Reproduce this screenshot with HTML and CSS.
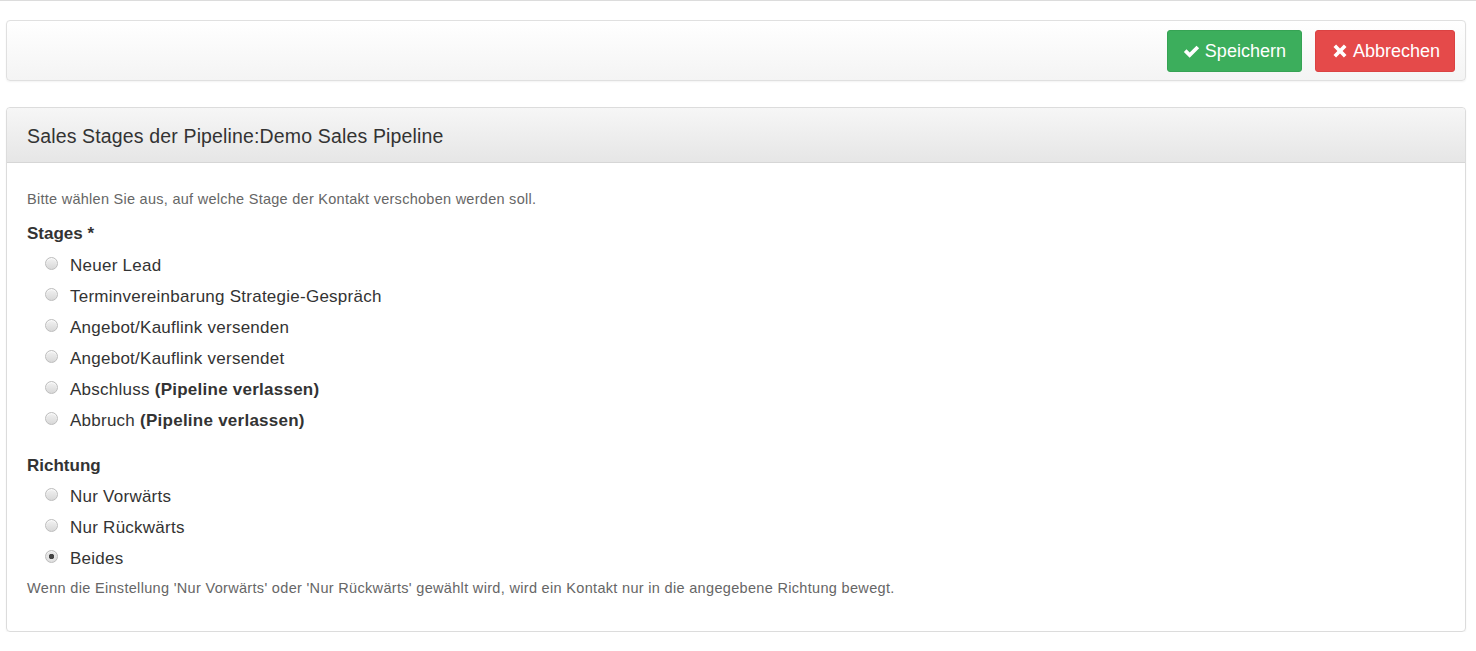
FILE: index.html
```html
<!DOCTYPE html>
<html lang="de">
<head>
  <meta charset="UTF-8">
  <meta name="viewport" content="width=device-width, initial-scale=1.0">
  <title>Sales Stages</title>
  <link rel="stylesheet" href="styles.css">
</head>
<body>
  <!-- Toolbar -->
  <div class="toolbar">
    <button type="button" class="btn btn-success">
      <svg class="btn-icon" viewBox="0 0 16 16" width="17" height="17"><path d="M0.8 8.4 L3.3 5.9 L6.3 8.9 L12.7 2.5 L15.2 5 L6.3 13.9 Z" fill="#fff"/></svg>
      Speichern
    </button>
    <button type="button" class="btn btn-danger">
      <svg class="btn-icon" viewBox="0 0 16 16" width="16" height="16"><path d="M1.5 4.1 L4.1 1.5 L8 5.4 L11.9 1.5 L14.5 4.1 L10.6 8 L14.5 11.9 L11.9 14.5 L8 10.6 L4.1 14.5 L1.5 11.9 L5.4 8 Z" fill="#fff"/></svg>
      Abbrechen
    </button>
  </div>

  <!-- Stages Panel -->
  <div class="panel">
    <div class="panel-heading">Sales Stages der Pipeline:Demo Sales Pipeline</div>
    <div class="panel-body">
      <p class="help">Bitte wählen Sie aus, auf welche Stage der Kontakt verschoben werden soll.</p>

      <div class="group">
        <div class="group-label">Stages *</div>
        <label class="radio"><input type="radio" name="stage"> Neuer Lead</label>
        <label class="radio"><input type="radio" name="stage"> Terminvereinbarung Strategie-Gespräch</label>
        <label class="radio"><input type="radio" name="stage"> Angebot/Kauflink versenden</label>
        <label class="radio"><input type="radio" name="stage"> Angebot/Kauflink versendet</label>
        <label class="radio"><input type="radio" name="stage"> Abschluss <strong>(Pipeline verlassen)</strong></label>
        <label class="radio"><input type="radio" name="stage"> Abbruch <strong>(Pipeline verlassen)</strong></label>
      </div>

      <div class="group">
        <div class="group-label">Richtung</div>
        <label class="radio"><input type="radio" name="direction"> Nur Vorwärts</label>
        <label class="radio"><input type="radio" name="direction"> Nur Rückwärts</label>
        <label class="radio"><input type="radio" name="direction" checked> Beides</label>
        <p class="help help-bottom">Wenn die Einstellung 'Nur Vorwärts' oder 'Nur Rückwärts' gewählt wird, wird ein Kontakt nur in die angegebene Richtung bewegt.</p>
      </div>
    </div>
  </div>
</body>
</html>
```

FILE: styles.css
```css
/* General */
body {
  font-family: 'Liberation Sans', Arial, sans-serif;
  margin: 0;
  padding: 19px 10px 0 6px;
  border-top: 1px solid #dcdcdc;
  color: #333;
  background-color: #fff;
}

/* Toolbar */
.toolbar {
  display: flex;
  justify-content: flex-end;
  gap: 13px;
  padding: 9px 10px 8px;
  border: 1px solid #e0e0e0;
  border-radius: 4px;
  background: linear-gradient(to bottom, #ffffff, #f4f4f4);
  box-shadow: 0 1px 2px rgba(0, 0, 0, 0.05);
}

.btn {
  display: flex;
  align-items: center;
  gap: 5px;
  height: 42px;
  padding: 0 15px;
  border: 1px solid transparent;
  border-radius: 3px;
  color: #fff;
  font-family: inherit;
  font-size: 18px;
  cursor: pointer;
}

.btn-success {
  background-color: #3cae5c;
  border-color: #36a354;
}

.btn-danger {
  background-color: #e54a4a;
  border-color: #db4242;
  padding: 0 14px 0 16px;
}

.btn-icon {
  display: block;
}

/* Panel */
.panel {
  margin-top: 26px;
  border: 1px solid #dcdcdc;
  border-radius: 4px;
  box-shadow: 0 1px 2px rgba(0, 0, 0, 0.05);
}

.panel-heading {
  height: 55px;
  box-sizing: border-box;
  padding: 17px 20px 0;
  font-size: 19.5px;
  letter-spacing: 0.15px;
  color: #333;
  border-bottom: 1px solid #d6d6d6;
  border-radius: 4px 4px 0 0;
  background: linear-gradient(to bottom, #f6f6f6, #e6e6e6);
}

.panel-body {
  padding: 28px 20px 35px;
}

.help {
  margin: 0;
  font-size: 14.5px;
  letter-spacing: 0.27px;
  color: #666;
  line-height: 16px;
}

.group {
  margin-top: 17px;
}

.group + .group {
  margin-top: 20px;
}

.group-label {
  font-size: 17px;
  font-weight: bold;
  line-height: 20px;
  margin-bottom: 6px;
}

.group + .group .group-label {
  margin-bottom: 5px;
}

/* Radios */
.radio {
  display: flex;
  align-items: center;
  height: 31px;
  padding-left: 18px;
  font-size: 17px;
  letter-spacing: 0.25px;
  color: #333;
}

.radio strong {
  margin-left: 5px;
}

.radio input {
  appearance: none;
  width: 13px;
  height: 13px;
  margin: -5px 12px 0 0;
  border-radius: 50%;
  border: 1px solid #bdbdbd;
  background: linear-gradient(to bottom, #f2f2f2, #d8d8d8);
  box-shadow: inset 0 1px 1px rgba(255, 255, 255, 0.8);
}

.radio input:checked {
  background: radial-gradient(circle, #444 0, #444 2.5px, #e6e6e6 3px, #d6d6d6 100%);
}

.help-bottom {
  margin-top: 6px;
  letter-spacing: 0.32px;
}
```
